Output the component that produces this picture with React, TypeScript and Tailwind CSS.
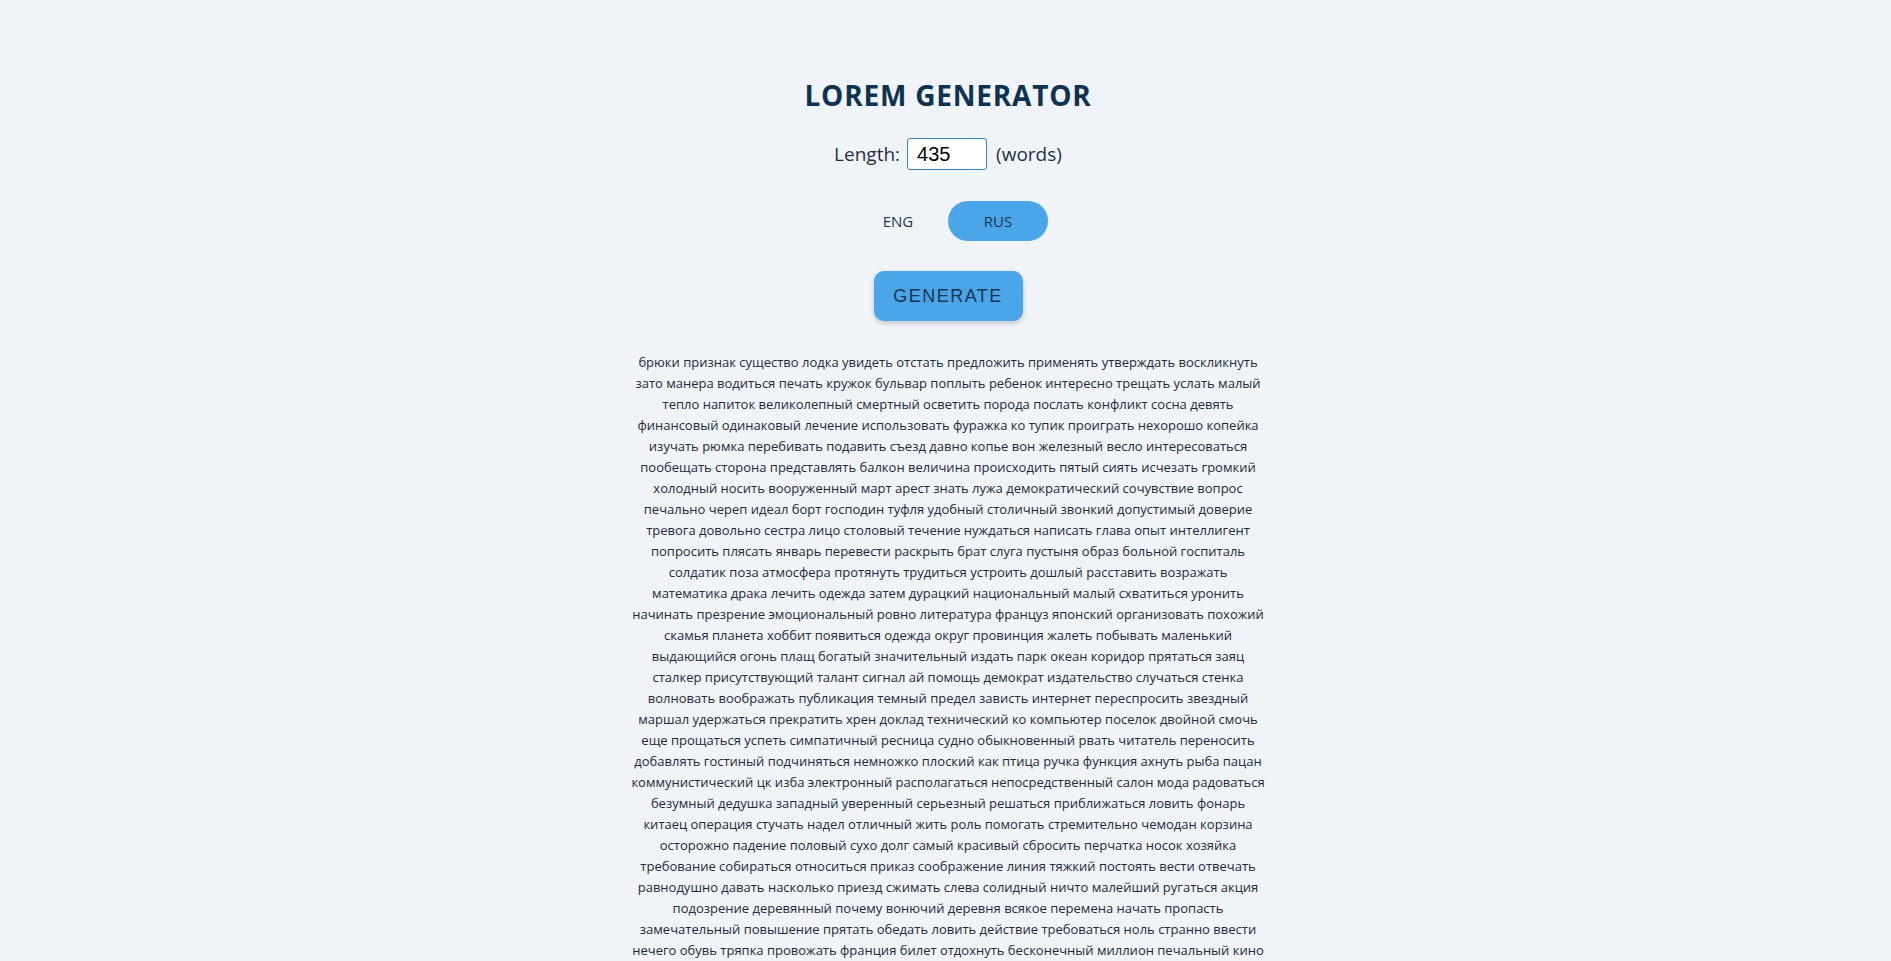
import React, { useState } from "react";

const LINES = [
  "брюки признак существо лодка увидеть отстать предложить применять утверждать воскликнуть",
  "зато манера водиться печать кружок бульвар поплыть ребенок интересно трещать услать малый",
  "тепло напиток великолепный смертный осветить порода послать конфликт сосна девять",
  "финансовый одинаковый лечение использовать фуражка ко тупик проиграть нехорошо копейка",
  "изучать рюмка перебивать подавить съезд давно копье вон железный весло интересоваться",
  "пообещать сторона представлять балкон величина происходить пятый сиять исчезать громкий",
  "холодный носить вооруженный март арест знать лужа демократический сочувствие вопрос",
  "печально череп идеал борт господин туфля удобный столичный звонкий допустимый доверие",
  "тревога довольно сестра лицо столовый течение нуждаться написать глава опыт интеллигент",
  "попросить плясать январь перевести раскрыть брат слуга пустыня образ больной госпиталь",
  "солдатик поза атмосфера протянуть трудиться устроить дошлый расставить возражать",
  "математика драка лечить одежда затем дурацкий национальный малый схватиться уронить",
  "начинать презрение эмоциональный ровно литература француз японский организовать похожий",
  "скамья планета хоббит появиться одежда округ провинция жалеть побывать маленький",
  "выдающийся огонь плащ богатый значительный издать парк океан коридор прятаться заяц",
  "сталкер присутствующий талант сигнал ай помощь демократ издательство случаться стенка",
  "волновать воображать публикация темный предел зависть интернет переспросить звездный",
  "маршал удержаться прекратить хрен доклад технический ко компьютер поселок двойной смочь",
  "еще прощаться успеть симпатичный ресница судно обыкновенный рвать читатель переносить",
  "добавлять гостиный подчиняться немножко плоский как птица ручка функция ахнуть рыба пацан",
  "коммунистический цк изба электронный располагаться непосредственный салон мода радоваться",
  "безумный дедушка западный уверенный серьезный решаться приближаться ловить фонарь",
  "китаец операция стучать надел отличный жить роль помогать стремительно чемодан корзина",
  "осторожно падение половый сухо долг самый красивый сбросить перчатка носок хозяйка",
  "требование собираться относиться приказ соображение линия тяжкий постоять вести отвечать",
  "равнодушно давать насколько приезд сжимать слева солидный ничто малейший ругаться акция",
  "подозрение деревянный почему вонючий деревня всякое перемена начать пропасть",
  "замечательный повышение прятать обедать ловить действие требоваться ноль странно ввести",
  "нечего обувь тряпка провожать франция билет отдохнуть бесконечный миллион печальный кино",
];

const App = () => {
  const [lang, setLang] = useState<"eng" | "rus">("rus");
  const [length, setLength] = useState("435");

  return (
    <div className="min-h-screen bg-[#f0f4f8] font-['Open_Sans',sans-serif] text-[#1d2b3a]">
      <div className="flex flex-col items-center pt-[78px] pl-[5px]">
        {/* TITLE */}
        <h1 className="text-[28px] leading-[34px] font-bold tracking-[0.8px] text-[#0d3352]">
          LOREM GENERATOR
        </h1>

        {/* LENGTH */}
        <div className="mt-[26px] flex items-center text-[19px] text-[#1e3048]">
          <span>Length:</span>
          <input
            value={length}
            onChange={(e) => setLength(e.target.value)}
            className="ml-[7px] h-[32px] w-[80px] rounded-[3px] border border-[#3d86c6] bg-white pl-[9px] font-['Liberation_Sans',sans-serif] text-[20px] text-black outline-none"
          />
          <span className="ml-[9px]">(words)</span>
        </div>

        {/* LANG TOGGLE */}
        <div className="mt-[31px] flex">
          <button
            onClick={() => setLang("eng")}
            className={`h-[40px] w-[100px] rounded-full text-[15px] text-[#1c3550] ${lang === "eng" ? "bg-[#4aa6e8]" : "bg-transparent"}`}
          >
            ENG
          </button>
          <button
            onClick={() => setLang("rus")}
            className={`h-[40px] w-[100px] rounded-full text-[15px] text-[#1c3550] ${lang === "rus" ? "bg-[#4aa6e8]" : "bg-transparent"}`}
          >
            RUS
          </button>
        </div>

        {/* GENERATE */}
        <button className="mt-[30px] h-[50px] w-[149px] rounded-[10px] bg-[#4aa6e8] font-['Liberation_Sans',sans-serif] text-[18px] tracking-[1.5px] text-[#1c3550] shadow-[0_2px_5px_rgba(0,0,0,0.2)]">
          GENERATE
        </button>

        {/* TEXT */}
        <div className="mt-[31px] w-[640px] text-center text-[13px] leading-[21px] text-[#1d2b3a]">
          {LINES.map((line, i) => (
            <div key={i} className="whitespace-nowrap">
              {line}
            </div>
          ))}
        </div>
      </div>
    </div>
  );
};

export default App;
